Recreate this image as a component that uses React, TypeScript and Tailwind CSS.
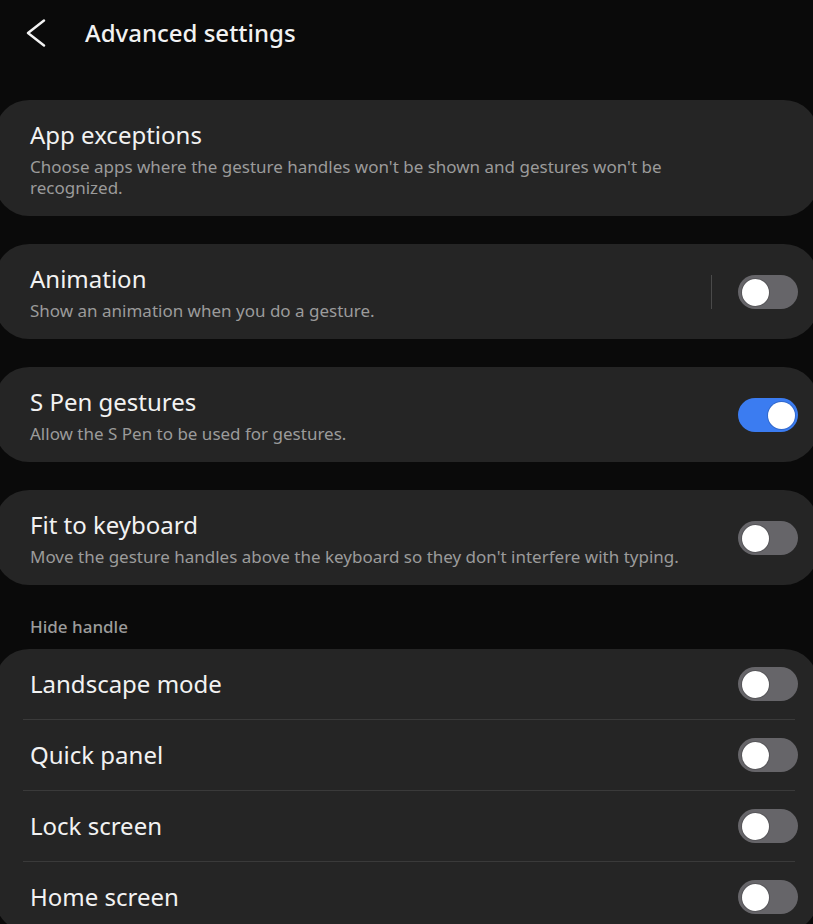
// Samsung-style switch, purely visual
const Toggle = ({ on }: { on: boolean }) => {
  return (
    <div
      className={`flex h-[34px] w-[60px] shrink-0 items-center rounded-full px-[3.5px] ${
        on ? "justify-end bg-[#3b7cf1]" : "justify-start bg-[#666569]"
      }`}
    >
      <div className="h-[27px] w-[27px] rounded-full bg-white shadow-[0_0_0_1px_rgba(0,0,0,0.15)]" />
    </div>
  );
};

const SettingCard = ({
  title,
  subtitle,
  toggle,
  divider = false,
}: {
  title: string;
  subtitle: string;
  toggle?: boolean;
  divider?: boolean;
}) => {
  return (
    <div className="flex items-center gap-[20px] rounded-[34px] bg-[#252525] pl-[35px] pr-[20px] pt-[19px] pb-[18px]">
      <div className="flex min-w-0 flex-1 flex-col gap-[5px]">
        <div className="text-[24px] leading-[32px] text-[#f2f2f2]">{title}</div>
        <div className="max-w-[680px] text-[17px] leading-[21px] text-[#9b9b9b]">{subtitle}</div>
      </div>
      {divider && <div className="mr-[6px] h-[34px] w-px bg-[#4a4a4a]" />}
      {toggle !== undefined && <Toggle on={toggle} />}
    </div>
  );
};

const hideHandleRows = ["Landscape mode", "Quick panel", "Lock screen", "Home screen"];

export default function App() {
  return (
    <div
      className="h-[924px] w-[813px] overflow-hidden bg-[#0a0a0a]"
      style={{ fontFamily: '"Noto Sans", "Open Sans", sans-serif' }}
    >
      {/* Header */}
      <div className="flex h-[66px] items-center pl-[26px]">
        <svg width="20" height="28" viewBox="0 0 20 28" fill="none" className="shrink-0">
          <polyline
            points="18,1.5 2,14 18,26.5"
            stroke="#f2f2f2"
            strokeWidth="2.4"
            strokeLinecap="round"
            strokeLinejoin="round"
          />
        </svg>
        <div className="ml-[39px] text-[24px] font-medium text-[#f2f2f2]">Advanced settings</div>
      </div>

      <div className="-mx-[5px] mt-[34px] flex flex-col gap-[28px]">
        <SettingCard
          title="App exceptions"
          subtitle="Choose apps where the gesture handles won't be shown and gestures won't be recognized."
        />
        <SettingCard title="Animation" subtitle="Show an animation when you do a gesture." toggle={false} divider />
        <SettingCard title="S Pen gestures" subtitle="Allow the S Pen to be used for gestures." toggle={true} />
        <SettingCard
          title="Fit to keyboard"
          subtitle="Move the gesture handles above the keyboard so they don't interfere with typing."
          toggle={false}
        />
      </div>

      <div className="flex h-[64px] items-center pl-[30px] pt-[20px] text-[17px] font-medium text-[#9c9c9c]">
        Hide handle
      </div>

      <div className="-mx-[5px] rounded-[34px] bg-[#252525]">
        {hideHandleRows.map((label, i) => (
          <div key={label}>
            {i > 0 && <div className="ml-[28px] mr-[23px] h-px bg-[#3a3a3a]" />}
            <div className="flex h-[70px] items-center pl-[35px] pr-[20px]">
              <div className="flex-1 text-[24px] text-[#f2f2f2]">{label}</div>
              <Toggle on={false} />
            </div>
          </div>
        ))}
      </div>
    </div>
  );
}
